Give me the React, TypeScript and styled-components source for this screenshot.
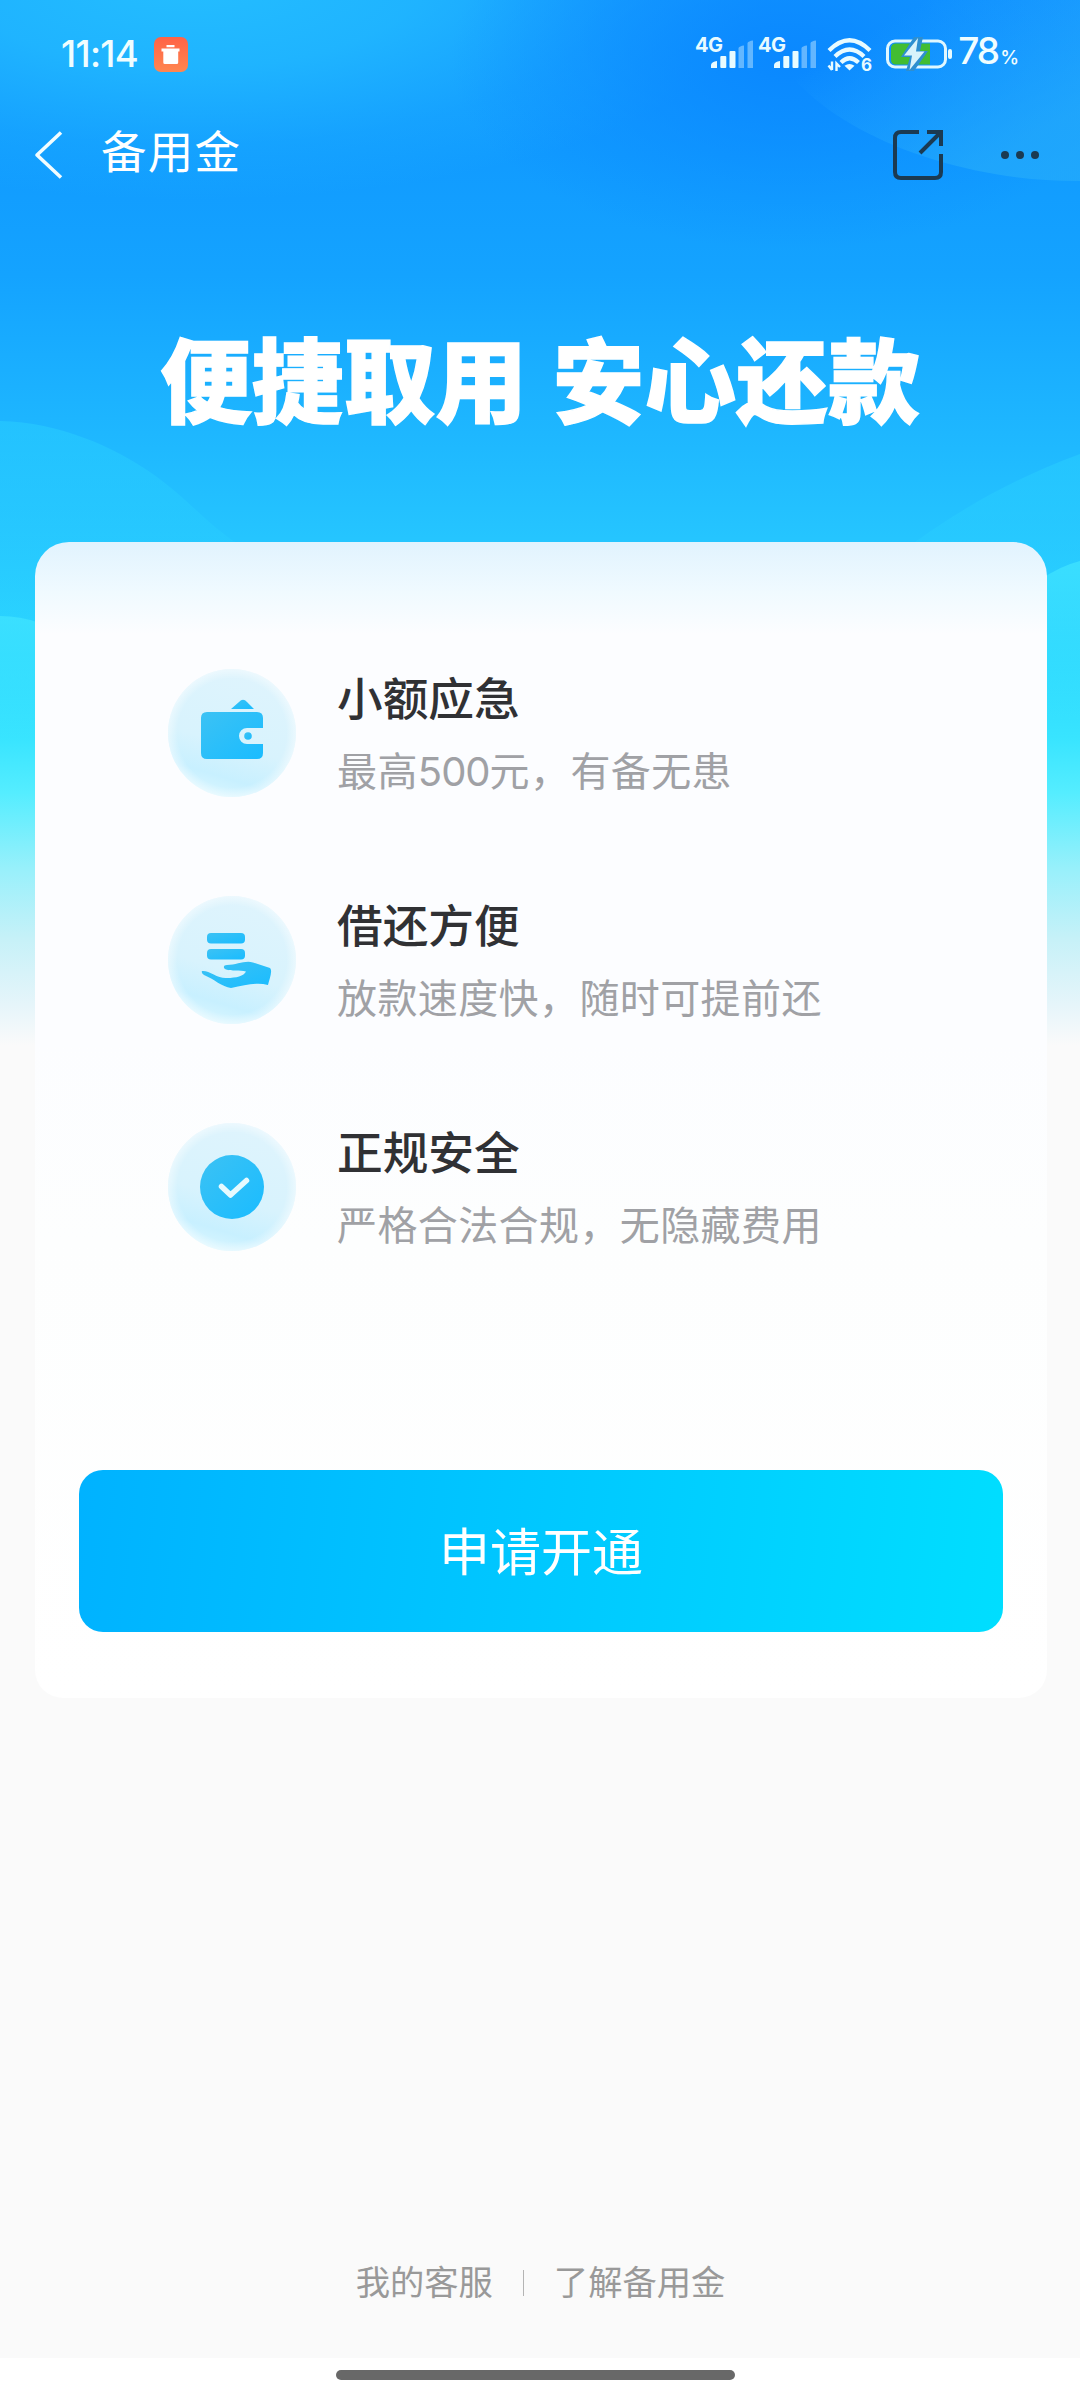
import React from "react";
import styled, { createGlobalStyle } from "styled-components";

const Global = createGlobalStyle`
  * { box-sizing: border-box; }
  body { margin: 0; background: #fff; }
`;

const Page = styled.div`
  position: relative;
  width: 1080px;
  height: 2400px;
  display: flex;
  flex-direction: column;
  overflow: hidden;
  background: #fafafa;
  font-family: Inter, "Noto Sans CJK SC", sans-serif;
`;

const Backdrop = styled.svg`
  position: absolute;
  left: 0;
  top: 0;
`;

const Hero = styled.div`
  position: relative;
  display: flex;
  flex-direction: column;
  height: 542px;
  flex: none;
`;

const StatusBar = styled.div`
  display: flex;
  align-items: center;
  justify-content: space-between;
  height: 108px;
  padding: 0 61px 0 60px;
  color: #f0fdff;
`;

const StatusGroup = styled.div`
  display: flex;
  align-items: center;
`;

const Clock = styled.span`
  font-size: 36.5px;
  font-weight: 500;
  line-height: 44px;
  letter-spacing: -0.7px;
  width: 94px;
  padding-left: 1px;
  white-space: nowrap;
`;

const Percent = styled.span`
  font-size: 37px;
  font-weight: 500;
  line-height: 44px;
  letter-spacing: -2px;
  margin-left: 5px;
  padding-top: 1px;
  white-space: nowrap;
  small { font-size: 19px; letter-spacing: 0; margin-left: 2px; }
`;

const NavBar = styled.div`
  display: flex;
  align-items: center;
  height: 94px;
  padding: 0 37px 0 32px;
`;

const NavTitle = styled.h1`
  flex: 1;
  margin: -4px 0 0 35px;
  font-size: 45.5px;
  font-weight: 400;
  letter-spacing: 1.2px;
  line-height: 60px;
  color: #fff;
`;

const Dots = styled.svg`
  margin-left: 54px;
`;

const Headline = styled.h2`
  margin: 111px 0 0;
  text-align: center;
  font-size: 91.5px;
  font-weight: 900;
  line-height: 140px;
  letter-spacing: 0.3px;
  word-spacing: 7px;
  color: #fff;
  white-space: nowrap;
  -webkit-text-stroke: 1.4px #fff;
`;

const Card = styled.main`
  position: relative;
  flex: none;
  display: flex;
  flex-direction: column;
  width: 1012px;
  height: 1156px;
  margin-left: 35px;
  padding: 119px 44px 66px;
  border-radius: 34px 34px 28px 28px;
  background: linear-gradient(180deg, #e1f3fe 0, #f0faff 50px, #fcfdff 92px, #fcfdff 500px, #fdfefe 700px, #fff 100%);
`;

const FeatureList = styled.div`
  display: flex;
  flex-direction: column;
  gap: 83px;
  padding-left: 81px;
`;

const Feature = styled.section`
  display: flex;
  align-items: center;
  height: 144px;
  gap: 33px;
`;

const FeatureText = styled.div`
  display: flex;
  flex-direction: column;
  margin-top: 6px;
`;

const FeatureTitle = styled.h3`
  margin: 0;
  font-size: 45.7px;
  font-weight: 500;
  line-height: 66px;
  color: #303134;
`;

const FeatureDesc = styled.p`
  margin: 6px 0 0;
  font-size: 40px;
  letter-spacing: 0.4px;
  font-weight: 400;
  line-height: 66px;
  color: #a0a1a5;
  white-space: nowrap;
`;

const Amount = styled.span`
  letter-spacing: -1px;
`;

const Apply = styled.button`
  margin-top: auto;
  height: 162px;
  padding: 0 0 5px;
  border: 0;
  border-radius: 24px;
  background: linear-gradient(97deg, #00b2ff 0%, #00c8ff 50%, #00deff 100%);
  font: 400 51px Inter, "Noto Sans CJK SC", sans-serif;
  color: #fff;
`;

const Footer = styled.footer`
  display: flex;
  align-items: center;
  justify-content: center;
  gap: 30px;
  height: 60px;
  margin-top: 555px;
  padding-left: 1px;
  font-size: 34.3px;
  line-height: 60px;
  color: #999;
`;

const Divider = styled.span`
  width: 1px;
  height: 26px;
  background: #b4b4b4;
`;

const HomeArea = styled.div`
  display: flex;
  justify-content: center;
  height: 42px;
  margin-top: auto;
  padding: 12px 9px 0 0;
  background: #fff;
`;

const HomeBar = styled.div`
  width: 399px;
  height: 10px;
  border-radius: 5px;
  background: #686868;
`;

const Sky = () => (
  <Backdrop width="1080" height="1100" viewBox="0 0 1080 1100">
    <defs>
      <linearGradient id="sky" x1="0" y1="0" x2="0" y2="1">
        <stop offset="0" stopColor="#1496ff" />
        <stop offset="0.14" stopColor="#119bff" />
        <stop offset="0.25" stopColor="#14a3ff" />
        <stop offset="0.38" stopColor="#1db5ff" />
        <stop offset="0.49" stopColor="#25c5ff" />
        <stop offset="0.6" stopColor="#2cd8ff" />
        <stop offset="0.67" stopColor="#38e4ff" />
        <stop offset="0.72" stopColor="#54edff" />
        <stop offset="0.79" stopColor="#98f0fb" />
        <stop offset="0.853" stopColor="#c6f1f8" />
        <stop offset="0.914" stopColor="#e6f5fa" />
        <stop offset="0.95" stopColor="#fafafa" />
      </linearGradient>
      <radialGradient id="glowL" gradientUnits="userSpaceOnUse" cx="0" cy="0" r="1" gradientTransform="translate(190 -20) scale(580 220)">
        <stop offset="0" stopColor="#24beff" />
        <stop offset="0.4" stopColor="#22bbff" stopOpacity="0.8" />
        <stop offset="0.75" stopColor="#22bbff" stopOpacity="0.25" />
        <stop offset="1" stopColor="#24beff" stopOpacity="0" />
      </radialGradient>
      <radialGradient id="deepR" gradientUnits="userSpaceOnUse" cx="0" cy="0" r="1" gradientTransform="translate(790 60) scale(340 190)">
        <stop offset="0" stopColor="#0a88ff" />
        <stop offset="0.6" stopColor="#0a88ff" stopOpacity="0.35" />
        <stop offset="1" stopColor="#0a88ff" stopOpacity="0" />
      </radialGradient>
      <linearGradient id="blob" x1="0" y1="0" x2="1" y2="1">
        <stop offset="0.25" stopColor="#28aaff" stopOpacity="0" />
        <stop offset="0.8" stopColor="#28aefa" stopOpacity="0.6" />
      </linearGradient>
      <linearGradient id="hill" x1="0" y1="0" x2="0" y2="1">
        <stop offset="0" stopColor="#2ad0ff" stopOpacity="0.5" />
        <stop offset="1" stopColor="#2ed8ff" stopOpacity="0" />
      </linearGradient>
      <linearGradient id="hill2" x1="0" y1="0" x2="0" y2="1">
        <stop offset="0" stopColor="#40e4ff" stopOpacity="0.75" />
        <stop offset="1" stopColor="#44e8ff" stopOpacity="0" />
      </linearGradient>
    </defs>
    <rect width="1080" height="1100" fill="url(#sky)" />
    <rect width="1080" height="300" fill="url(#glowL)" />
    <rect width="1080" height="300" fill="url(#deepR)" />
    <path d="M770 40C800 120 940 182 1080 181V0H770Z" fill="url(#blob)" />
    <path d="M0 421C60 422 115 448 150 472S205 522 235 542V640H0Z" fill="url(#hill)" />
    <path d="M1080 454C1010 480 960 510 915 542V640H1080Z" fill="url(#hill)" />
    <path d="M0 616Q20 616 40 623V740H0Z" fill="url(#hill2)" />
    <path d="M1080 561Q1060 566 1040 580V720H1080Z" fill="url(#hill2)" />
  </Backdrop>
);

const TrashBadge = () => (
  <svg width="34" height="35" viewBox="0 0 34 35">
    <defs>
      <linearGradient id="badge" x1="0" y1="0" x2="0" y2="1">
        <stop offset="0" stopColor="#ff6346" />
        <stop offset="1" stopColor="#ff8650" />
      </linearGradient>
    </defs>
    <rect width="34" height="35" rx="7" fill="url(#badge)" />
    <path d="M12.5 8H20.5V10.2H12.5ZM7.500 11.500H25.500V14.500H24.200V25.500Q24.200 27 22.700 27H10.800Q9.300 27 9.300 25.500V14.500H7.500Z" fill="#fff" />
  </svg>
);

const SignalBox = styled.svg`
  margin-right: 3px;
  font: 700 20px Inter, sans-serif;
`;

const Signal = () => (
  <SignalBox width="60" height="51" viewBox="0 -6 60 51" fill="#e8fbff">
    <text x="0" y="17" letterSpacing="-0.6">4G</text>
    <path d="M16 33V29.500Q17 26.500 22 26V33Z" />
    <rect x="25.300" y="21" width="6" height="12" rx="1" />
    <rect x="34.500" y="16" width="6" height="17" rx="1" />
    <path d="M43.500 33V13Q44.500 11 49 10.500V33ZM52.500 33V8Q53.500 6 58 5.500V33Z" opacity=".4" />
  </SignalBox>
);

const WifiBox = styled.svg`
  margin: 0 13px 0 6px;
  font: 700 17px Inter, sans-serif;
`;

const Wifi = () => (
  <WifiBox width="46" height="46" viewBox="0 -6 46 46" fill="none" stroke="#e8fbff" strokeWidth="4.2">
    <path d="M2 13.500Q22.500 -7 43 13.500" />
    <path d="M8 19.500Q22.500 5.500 37 19.500" />
    <path d="M14 25.500Q22.500 17 31.500 25.500" />
    <path d="M17.500 28.800Q22.500 25 27.500 28.800L22.500 33.500Z" fill="#e8fbff" stroke="none" />
    <path d="M5 24.500V33M1.500 28.500L5 33M9.500 34V26.500L13 30" strokeWidth="2.400" />
    <text x="34" y="33.500" fill="#e8fbff" stroke="none">6</text>
  </WifiBox>
);

const Battery = () => (
  <svg width="67" height="36" viewBox="0 0 67 36">
    <rect x="1.500" y="5" width="58" height="26" rx="7.500" fill="none" stroke="#e0f7ff" strokeWidth="3" />
    <path d="M10 7.500H44V28.500H10Q5 28.500 5 23.500V12.500Q5 7.500 10 7.500Z" fill="#42bd32" />
    <path d="M28 1L15 21H24L20 35H28L42 15H34L37 1Z" fill="#2e8fd0" />
    <path d="M32 2L18 19.500H26L23.500 34L38.500 15.500H30Z" fill="#d9f3fb" />
    <rect x="62" y="13" width="4" height="10" rx="2" fill="#e8fbff" />
  </svg>
);

const IconDisc = ({ id, children }: { id: string; children: React.ReactNode }) => (
  <svg width="144" height="144" viewBox="0 0 144 144">
    <defs>
      <linearGradient id={`${id}-disc`} x1="0.7" y1="0" x2="0.4" y2="1">
        <stop offset="0" stopColor="#dff4fd" />
        <stop offset="0.6" stopColor="#d8f3fd" />
        <stop offset="0.85" stopColor="#c8f0ff" />
        <stop offset="1" stopColor="#d8f6ff" />
      </linearGradient>
      <radialGradient id={`${id}-edge`}>
        <stop offset="0.85" stopColor="#fff" stopOpacity="0" />
        <stop offset="1" stopColor="#fff" stopOpacity="0.45" />
      </radialGradient>
      <linearGradient id={`${id}-ink`} x1="0" y1="0" x2="1" y2="1">
        <stop offset="0" stopColor="#3cc2f4" />
        <stop offset="1" stopColor="#1abcff" />
      </linearGradient>
    </defs>
    <circle cx="72" cy="72" r="64" fill={`url(#${id}-disc)`} />
    <circle cx="72" cy="72" r="64" fill={`url(#${id}-edge)`} />
    <g fill={`url(#${id}-ink)`}>{children}</g>
  </svg>
);

const features = [
  {
    id: "wallet",
    title: "小额应急",
    desc: <>最高<Amount>500</Amount>元，有备无患</>,
    art: (
      <>
        <path d="M71 48L79 41Q83 36.500 87 41L94 48Z" />
        <path d="M47 51H97Q103 51 103 57V67H87A8 8 0 0 0 87 83H103V92Q103 98 97 98H47Q41 98 41 92V57Q41 51 47 51Z" />
        <circle cx="88" cy="75" r="3.800" />
      </>
    ),
  },
  {
    id: "loan",
    title: "借还方便",
    desc: "放款速度快，随时可提前还",
    art: (
      <>
        <rect x="47" y="45" width="38" height="10.500" rx="4" />
        <rect x="47" y="61" width="38" height="10.500" rx="4" />
        <path d="M42 83C49 82 58 91 67 90C76 90 84 88 86 83.500C80 82 71 83.500 66 81.500C63 80 63 77 67 77C77 77 85 72 93 74.500L110 80C113 83 109 92 108 97C97 94 86 97 71 100C62 99 54 91 44 87Q41 85 42 83Z" />
      </>
    ),
  },
  {
    id: "safe",
    title: "正规安全",
    desc: "严格合法合规，无隐藏费用",
    art: (
      <>
        <circle cx="72" cy="72" r="32" />
        <path d="M61.500 71.500L70.500 80L86.500 65.500" fill="none" stroke="#e6faff" strokeWidth="5.500" strokeLinecap="round" strokeLinejoin="round" />
      </>
    ),
  },
];

export default function App() {
  return (
    <Page>
      <Global />
      <Sky />
      <Hero>
        <StatusBar>
          <StatusGroup>
            <Clock>11:14</Clock>
            <TrashBadge />
          </StatusGroup>
          <StatusGroup>
            <Signal />
            <Signal />
            <Wifi />
            <Battery />
            <Percent>78<small>%</small></Percent>
          </StatusGroup>
        </StatusBar>
        <NavBar>
          <svg width="34" height="50" viewBox="0 0 34 50" fill="none" stroke="#f2fdff" strokeWidth="3.600">
            <path d="M29 2.500L5 25L29 47.500" strokeLinejoin="round" />
          </svg>
          <NavTitle>备用金</NavTitle>
          <svg width="50" height="50" viewBox="0 0 50 50" fill="none" stroke="#1b3a52" strokeWidth="4">
            <path d="M26 2H8Q2 2 2 8V42Q2 48 8 48H42Q48 48 48 42V24M34 2H48V16M47 3L27 23" />
          </svg>
          <Dots width="46" height="10" viewBox="0 0 46 10" fill="#1b3a52">
            <circle cx="8" cy="5" r="4" />
            <circle cx="23" cy="5" r="4" />
            <circle cx="38" cy="5" r="4" />
          </Dots>
        </NavBar>
        <Headline>便捷取用 安心还款</Headline>
      </Hero>
      <Card>
        <FeatureList>
          {features.map((f) => (
            <Feature key={f.id}>
              <IconDisc id={f.id}>{f.art}</IconDisc>
              <FeatureText>
                <FeatureTitle>{f.title}</FeatureTitle>
                <FeatureDesc>{f.desc}</FeatureDesc>
              </FeatureText>
            </Feature>
          ))}
        </FeatureList>
        <Apply>申请开通</Apply>
      </Card>
      <Footer>
        <span>我的客服</span>
        <Divider />
        <span>了解备用金</span>
      </Footer>
      <HomeArea>
        <HomeBar />
      </HomeArea>
    </Page>
  );
}
